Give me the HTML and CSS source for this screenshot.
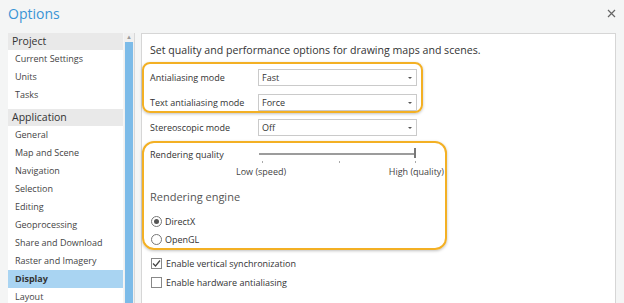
FILE: index.html
```html
<!DOCTYPE html>
<html lang="en">
<head>
  <meta charset="UTF-8">
  <title>Options</title>
  <link rel="stylesheet" href="styles.css">
</head>
<body>

<header class="titlebar">
  <h1>Options</h1>
  <svg class="close" width="9" height="9" viewBox="0 0 9 9"><path d="M1 1L8 8M8 1L1 8" stroke="#666" stroke-width="1.2"/></svg>
</header>

<div class="main">
  <nav class="nav">
    <div class="group">Project</div>
    <div class="item">Current Settings</div>
    <div class="item">Units</div>
    <div class="item">Tasks</div>
    <div class="group gap">Application</div>
    <div class="item">General</div>
    <div class="item">Map and Scene</div>
    <div class="item">Navigation</div>
    <div class="item">Selection</div>
    <div class="item">Editing</div>
    <div class="item">Geoprocessing</div>
    <div class="item">Share and Download</div>
    <div class="item">Raster and Imagery</div>
    <div class="item active">Display</div>
    <div class="item">Layout</div>
  </nav>

  <div class="scrollbar">
    <div class="arrow">&#9650;</div>
    <div class="thumb"></div>
  </div>

  <section class="panel">
    <h2 class="heading">Set quality and performance options for drawing maps and scenes.</h2>

    <div class="mark mark-a">
      <div class="row">
        <span class="label">Antialiasing mode</span>
        <div class="select">Fast<span class="caret"></span></div>
      </div>
      <div class="row">
        <span class="label">Text antialiasing mode</span>
        <div class="select">Force<span class="caret"></span></div>
      </div>
    </div>

    <div class="row plain">
      <span class="label">Stereoscopic mode</span>
      <div class="select">Off<span class="caret"></span></div>
    </div>

    <div class="mark mark-b">
      <div class="row quality">
        <span class="label">Rendering quality</span>
        <div class="slider">
          <div class="track"></div>
          <div class="thumb-mark"></div>
          <div class="tick t1"></div>
          <div class="tick t2"></div>
          <div class="tick t3"></div>
        </div>
      </div>
      <div class="scale">
        <span>Low (speed)</span>
        <span>High (quality)</span>
      </div>
      <h3 class="subhead">Rendering engine</h3>
      <label class="option"><span class="radio on"></span>DirectX</label>
      <label class="option last"><span class="radio"></span>OpenGL</label>
    </div>

    <label class="option check first"><span class="box"><svg width="9" height="9" viewBox="0 0 9 9"><path d="M1 4.5L3.5 7L8 1.5" fill="none" stroke="#444" stroke-width="1.2"/></svg></span>Enable vertical synchronization</label>
    <label class="option check"><span class="box"></span>Enable hardware antialiasing</label>
  </section>
</div>

</body>
</html>
```

FILE: styles.css
```css
body {
  margin: 0;
  height: 303px;
  overflow: hidden;
  background-color: #f4f5f5;
  font-family: 'Open Sans', 'Noto Sans', sans-serif;
  font-size: 9px;
  color: #444;
}

.titlebar {
  height: 33px;
  display: flex;
  align-items: center;
  justify-content: space-between;
  padding: 0 8px 0 8px;
  box-sizing: border-box;
}

.titlebar h1 {
  margin: -6px 0 0;
  font-size: 14px;
  font-weight: normal;
  color: #3a94d6;
}

.close {
  margin-top: -7px;
}

.main {
  display: flex;
  height: 270px;
  overflow: hidden;
  padding-left: 8px;
}

.nav {
  width: 115px;
  background-color: #fff;
}

.group {
  height: 17px;
  line-height: 17px;
  padding-left: 4px;
  background-color: #e9e9e9;
  font-size: 10.5px;
  color: #333;
}

.group.gap {
  margin-top: 5px;
}

.item {
  height: 18px;
  line-height: 18px;
  padding-left: 7px;
}

.item.active {
  background-color: #a9d4f2;
  font-weight: bold;
  color: #333;
}

.scrollbar {
  width: 10px;
  margin-left: 1px;
  border-right: 1px solid #d8d8d8;
  background-color: #f0f0f0;
}

.scrollbar .arrow {
  height: 9px;
  font-size: 6px;
  line-height: 9px;
  text-align: center;
  color: #999;
}

.scrollbar .thumb {
  margin: 0 1px;
  height: 261px;
  background-color: #7cbbe8;
}

.panel {
  margin-left: 6px;
  width: 475px;
  background-color: #fff;
  border: 1px solid #d6d6d6;
  border-bottom: none;
  box-sizing: border-box;
}

.heading {
  margin: 8px 0 0 8px;
  height: 16px;
  line-height: 16px;
  font-size: 10.6px;
  font-weight: normal;
  color: #333;
}

.mark {
  border: 2px solid #f3b024;
  border-radius: 8px;
  box-shadow: 0 1px 3px rgba(0,0,0,0.25);
}

.mark-a {
  width: 281px;
  margin-top: 4px;
  padding: 5px 4px 0 6px;
  box-sizing: border-box;
  display: flex;
  flex-direction: column;
  gap: 8px;
}

.row {
  display: flex;
  align-items: center;
  height: 17px;
}

.row.plain {
  margin-top: 6px;
  padding-left: 8px;
}

.label {
  width: 108px;
  color: #333;
}

.select {
  width: 159px;
  height: 17px;
  line-height: 15px;
  border: 1px solid #cacaca;
  box-sizing: border-box;
  padding-left: 3px;
  color: #333;
  display: flex;
  justify-content: space-between;
  align-items: center;
}

.caret {
  width: 0;
  height: 0;
  margin-right: 4px;
  border-left: 2px solid transparent;
  border-right: 2px solid transparent;
  border-top: 2px solid #555;
}

.mark-b {
  width: 305px;
  margin-top: 5px;
  padding: 2px 1px 0 6px;
  box-sizing: border-box;
  border-radius: 12px;
}

.quality {
  height: 18px;
}

.slider {
  position: relative;
  width: 159px;
  height: 18px;
}

.track {
  position: absolute;
  left: 1px;
  top: 8px;
  width: 156px;
  height: 2px;
  background-color: #9c9c9c;
}

.thumb-mark {
  position: absolute;
  left: 156px;
  top: 3px;
  width: 2px;
  height: 10px;
  background-color: #777;
}

.tick {
  position: absolute;
  top: 16px;
  width: 1px;
  height: 2px;
  background-color: #aaa;
}

.t1 { left: 4px; }
.t2 { left: 81px; }
.t3 { left: 157px; }

.scale {
  display: flex;
  justify-content: space-between;
  margin: 2px 0 0 86px;
  width: 208px;
  height: 14px;
  line-height: 14px;
  color: #444;
}

.subhead {
  margin: 9px 0 6px;
  height: 18px;
  line-height: 18px;
  font-size: 11px;
  font-weight: normal;
  color: #555;
}

.option {
  display: flex;
  align-items: center;
  height: 18px;
  margin-bottom: 1px;
  color: #333;
}

.option.last {
  margin-bottom: 0;
  height: 17px;
}

.radio {
  width: 9px;
  height: 9px;
  margin: 0 3px 0 1px;
  border: 1px solid #777;
  border-radius: 50%;
  display: flex;
  align-items: center;
  justify-content: center;
}

.radio.on::after {
  content: "";
  width: 5px;
  height: 5px;
  border-radius: 50%;
  background-color: #555;
}

.check {
  padding-left: 8px;
}

.check.first {
  margin-top: 4px;
}

.box {
  width: 9px;
  height: 9px;
  margin: 0 4px 0 1px;
  border: 1px solid #888;
  display: flex;
  align-items: center;
  justify-content: center;
}
```
